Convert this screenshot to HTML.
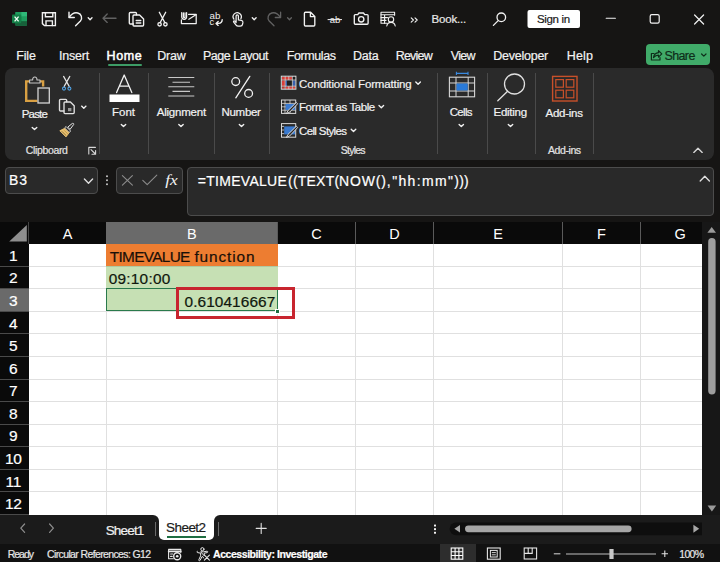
<!DOCTYPE html>
<html>
<head>
<meta charset="utf-8">
<title>Excel</title>
<style>
html,body{margin:0;padding:0;}
body{width:720px;height:562px;overflow:hidden;background:#161514;font-family:"Liberation Sans",sans-serif;color:#fff;position:relative;}
.abs{position:absolute;}
.t{position:absolute;white-space:pre;line-height:1;-webkit-text-stroke:0.2px currentColor;}
svg{position:absolute;overflow:visible;}
.s{fill:none;stroke:#f2f2f2;stroke-width:1.35;stroke-linecap:round;stroke-linejoin:round;}
.g{fill:none;stroke:#626262;stroke-width:1.35;stroke-linecap:round;stroke-linejoin:round;}
.sep{position:absolute;width:1px;background:#4a4a4a;top:73px;height:81px;}
.box{position:absolute;background:#292929;border:1px solid #4c4c4c;border-radius:4px;box-sizing:border-box;}
</style>
</head>
<body>

<!-- ================= TITLE BAR ICONS ================= -->
<svg style="left:0;top:0" width="720" height="40" viewBox="0 0 720 40">
  <!-- excel logo -->
  <g>
    <rect x="15.4" y="12" width="11.6" height="13.8" rx="1" fill="#1c9458"/>
    <rect x="21.2" y="12" width="5.8" height="4.6" fill="#2fb878"/>
    <rect x="15.4" y="12" width="5.8" height="4.6" fill="#1f9c5e"/>
    <rect x="21.2" y="16.6" width="5.8" height="4.6" fill="#1f9c5e"/>
    <rect x="15.4" y="16.6" width="5.8" height="4.6" fill="#117a42"/>
    <rect x="15.4" y="21.2" width="11.6" height="4.6" fill="#17603a"/>
    <rect x="12" y="14.6" width="9.2" height="8.6" rx="0.8" fill="#138048"/>
    <path d="M14.6 16.6 L18.6 21.4 M18.6 16.6 L14.6 21.4" stroke="#f4fff8" stroke-width="1.3" fill="none"/>
  </g>
  <!-- save -->
  <g class="s" style="stroke-width:1.4;stroke-linejoin:miter">
    <path d="M42.4 12.7 h13 v12.9 h-11 l-2 -2 z"/>
    <path d="M45.4 12.7 v4 h7.4 v-4"/>
    <path d="M46 25.6 v-4.7 h6.4 v4.7"/>
  </g>
  <!-- undo -->
  <g class="s" style="stroke-width:1.4">
    <path d="M69 12.2 v5.3 h5.3"/>
    <path d="M69.3 17.2 c2.2 -3.2 5.5 -5 8.5 -4.2 c3.6 1 5 5 2.6 8 l-4.8 4.8"/>
  </g>
  <path class="s" d="M88.2 17.8 l1.9 1.9 l1.9 -1.9"/>
  <!-- left arrow (disabled) -->
  <path class="g" d="M116 18.2 h-13 M107.2 14 l-4.2 4.2 l4.2 4.2"/>
  <!-- copy docs -->
  <g class="s">
    <path d="M133.5 24 h-3.2 a1 1 0 0 1 -1 -1 v-9.5 a1 1 0 0 1 1 -1 h5.2 a1 1 0 0 1 1 1 v1.2"/>
    <path d="M134 15 h5.6 l4 4 v6 a1 1 0 0 1 -1 1 h-8.6 a1 1 0 0 1 -1 -1 v-9 a1 1 0 0 1 1 -1 z"/>
    <path d="M136.2 20.5 h4.6 M136.2 23 h4.6"/>
  </g>
  <!-- scissors -->
  <g class="s">
    <path d="M159.3 12.3 l5.6 10.5 M165.7 12.3 l-5.6 10.5"/>
    <circle cx="159.6" cy="24.3" r="1.7"/>
    <circle cx="165.4" cy="24.3" r="1.7"/>
  </g>
  <!-- email attach -->
  <g class="s" style="stroke-width:1.25">
    <path d="M188.6 14.4 h7.6 v9.2 h-14.8 v-3.6"/>
    <path d="M195.9 14.7 l-7 4.6"/>
    <path d="M181.7 12.6 v4.2 a2.45 2.45 0 0 0 4.9 0 v-4.2 M183.4 12.8 v3.9 a0.8 0.8 0 0 0 1.6 0 v-3.9"/>
  </g>
  <!-- abc -->
  <g fill="#f0f0f0" font-family="Liberation Sans, sans-serif" font-size="8.5">
    <text x="209.6" y="18.6" textLength="10.8" lengthAdjust="spacingAndGlyphs">ab</text>
    <text x="209.6" y="25" textLength="4.6" lengthAdjust="spacingAndGlyphs">c</text>
  </g>
  <path class="s" d="M222.2 19.6 c0 2.4 -1.6 3.8 -3.6 3.8 h-2.4 M218.2 21.4 l-2.2 2 l2.2 2"/>
  <!-- touch -->
  <g class="s" style="stroke-width:1.25">
    <path d="M233.9 19.2 a4.1 4.1 0 1 1 7 -0.6"/>
    <path d="M236.1 22.6 v-6.6 a1.15 1.15 0 0 1 2.3 0 v3.9 l3 0.5 c1 0.2 1.6 1 1.5 2 l-0.3 1.8 c-0.2 1.2 -1.1 2 -2.3 2 h-2.2 c-0.8 0 -1.5 -0.3 -2 -1 l-2.4 -3.1 c-0.6 -0.8 0.4 -1.7 1.2 -1 z"/>
  </g>
  <path class="s" d="M252.3 17.8 l1.9 1.9 l1.9 -1.9"/>
  <!-- redo disabled -->
  <g class="g" style="stroke-width:1.3">
    <path d="M280.6 12.2 v5.3 h-5.3"/>
    <path d="M280.3 17.2 c-2.2 -3.2 -5.5 -5 -8.5 -4.2 c-3.6 1 -5 5 -2.6 8 l4.8 4.8"/>
  </g>
  <path class="g" d="M287.6 17.8 l1.9 1.9 l1.9 -1.9"/>
  <!-- new doc -->
  <path class="s" d="M304.4 13.2 a1 1 0 0 1 1 -1 h5.2 l4.2 4.2 v8.6 a1 1 0 0 1 -1 1 h-8.4 a1 1 0 0 1 -1 -1 z M310.4 12.4 v4.2 h4.2"/>
  <!-- ab strike -->
  <g fill="#f0f0f0" font-family="Liberation Sans, sans-serif" font-size="9.5">
    <text x="329.8" y="22.6">ab</text>
  </g>
  <path class="s" style="stroke-width:1" d="M328 19.6 h13.6"/>
  <!-- camera -->
  <g class="s">
    <path d="M354.3 15.6 a1 1 0 0 1 1 -1 h2.4 l1.2 -1.6 h4.6 l1.2 1.6 h2.4 a1 1 0 0 1 1 1 v7.6 a1 1 0 0 1 -1 1 h-11.8 a1 1 0 0 1 -1 -1 z"/>
    <circle cx="361.2" cy="19.3" r="2.7"/>
  </g>
  <!-- table person -->
  <g class="s" style="stroke-width:1.1">
    <path d="M387 23.2 h-6 v-11 h13.6 v3"/>
    <path d="M381 14.8 h13.6 M384.6 14.8 v8.4 M381 17.6 h6.5 M381 20.4 h5"/>
    <circle cx="391" cy="19.4" r="2.7"/>
    <path d="M386.8 26 c0.4 -2.4 2 -3.6 4.2 -3.6 c2.2 0 3.8 1.2 4.2 3.6"/>
  </g>
  <!-- chevrons -->
  <path class="s" style="stroke-width:1.1" d="M411.2 17.8 l2.2 2.2 l-2.2 2.2 M415 17.8 l2.2 2.2 l-2.2 2.2"/>
  <!-- search -->
  <g class="s" style="stroke-width:1.3">
    <circle cx="501.3" cy="17.3" r="4.3"/>
    <path d="M498.2 20.6 l-4.8 4.8"/>
  </g>
  <!-- sign in -->
  <rect x="527.5" y="10" width="52.5" height="18" rx="2" fill="#ffffff"/>
  <!-- window controls -->
  <path class="s" style="stroke-width:1.1" d="M606.2 18.3 h9.2"/>
  <rect class="s" style="stroke-width:1.2" x="650.2" y="14.6" width="9" height="8.6" rx="1.6"/>
  <path class="s" style="stroke-width:1.2" d="M694.6 15 l9 9 M703.6 15 l-9 9"/>
</svg>

<!-- home underline -->
<div class="abs" style="left:107.5px;top:63.6px;width:34.5px;height:2.2px;background:#3d9c66;border-radius:1px"></div>
<!-- share button -->
<div class="abs" style="left:646px;top:43.5px;width:64px;height:21.5px;background:#40ab69;border-radius:4px"></div>
<svg style="left:0;top:0" width="720" height="70" viewBox="0 0 720 70">
  <g fill="none" stroke="#0e2e1a" stroke-width="1.2" stroke-linecap="round" stroke-linejoin="round">
    <path d="M654 53.5 h-2.6 v6.5 h8.6 v-2.5"/>
    <path d="M653.5 57.5 c0.5 -3 2.5 -4.6 5 -4.8 v-2 l3.3 3.2 l-3.3 3.2 v-2 c-2 0 -3.6 0.8 -5 2.4 z"/>
    <path d="M701.6 54 l2.2 2.2 l2.2 -2.2"/>
  </g>
</svg>

<!-- ================= RIBBON ================= -->
<div class="abs" style="left:5px;top:68px;width:708.5px;height:92px;background:#2a2a2a;border-radius:8px"></div>
<div class="sep" style="left:99px"></div>
<div class="sep" style="left:148px"></div>
<div class="sep" style="left:214px"></div>
<div class="sep" style="left:269px"></div>
<div class="sep" style="left:436.5px"></div>
<div class="sep" style="left:486.5px"></div>
<div class="sep" style="left:535px"></div>
<div class="sep" style="left:592.5px"></div>

<svg style="left:0;top:0" width="720" height="165" viewBox="0 0 720 165">
  <!-- paste icon -->
  <g fill="none" stroke-linejoin="miter" stroke-linecap="butt">
    <path d="M37.4 100.9 h-11.2 v-19.5 h16.9 v5" stroke="#d9a043" stroke-width="2.4"/>
    <path d="M29.6 83 v-3 h3 c0 -1.4 0.8 -3 2.2 -3 c1.4 0 2.2 1.6 2.2 3 h3 v3 z" stroke="#c4c4c4" stroke-width="1.1" fill="#292929" stroke-linejoin="round"/>
    <rect x="38" y="88" width="11.3" height="15" stroke="#d4d4d4" stroke-width="1.3" fill="#303030"/>
  </g>
  <path class="s" d="M32.2 127.4 l2.3 2.2 l2.3 -2.2"/>
  <!-- scissors small (blue handles) -->
  <g fill="none" stroke-linecap="round" stroke-linejoin="round">
    <path d="M63.6 76.4 l5.6 10 M69.8 76.4 l-5.6 10" stroke="#e6e6e6" stroke-width="1.2"/>
    <circle cx="64" cy="88.6" r="1.5" stroke="#4fa0e0" stroke-width="1.1"/>
    <circle cx="69.4" cy="88.6" r="1.5" stroke="#4fa0e0" stroke-width="1.1"/>
  </g>
  <!-- copy -->
  <g class="s" style="stroke:#e0e0e0">
    <path d="M64 111 h-3.5 a1 1 0 0 1 -1 -1 v-9.6 a1 1 0 0 1 1 -1 h5.2 a1 1 0 0 1 1 1 v1.4"/>
    <path d="M65 102 h5.4 l3.8 3.8 v6.8 a1 1 0 0 1 -1 1 h-8.2 a1 1 0 0 1 -1 -1 v-9.6 a1 1 0 0 1 1 -1 z"/>
    <rect x="68" y="108" width="3.4" height="3.2" fill="#9a9a9a" stroke="none"/>
  </g>
  <path class="s" d="M81.6 106.1 l2.2 2.1 l2.2 -2.1"/>
  <!-- brush -->
  <g fill="none" stroke-linecap="round" stroke-linejoin="round">
    <path d="M72.4 123.4 c0.8 -0.6 1.8 0.4 1.2 1.2 l-3.6 4.8 l-2 -2 z" stroke="#e6e6e6" stroke-width="1" fill="#292929"/>
    <path d="M66.4 126.8 l4.2 4.2 l-1.4 1.6 l-4.4 -4.4 z" stroke="#e6e6e6" stroke-width="0.9" fill="#292929"/>
    <path d="M60.2 130.6 l4.4 -2.2 l4.4 4.4 l-2.8 3.8 z" stroke="#e8c070" stroke-width="1" fill="#e8c070"/>
    <path d="M62.6 131.6 l3.2 3.2 M64.4 130.6 l3 3" stroke="#a07a30" stroke-width="0.6"/>
  </g>
  <!-- dialog launcher -->
  <g class="s" style="stroke:#d8d8d8;stroke-width:1.1">
    <path d="M95.4 147.4 h-6.6 v6.6"/>
    <path d="M91 149.6 l4.4 4.4 M95.6 150.6 v3.6 h-3.6"/>
  </g>
  <!-- Font icon -->
  <path d="M116.6 92.6 l7.6 -17.6 l7.6 17.6 M119.4 86.2 h9.6" class="s" style="stroke-width:1.3"/>
  <rect x="109.5" y="94.5" width="30" height="7.5" fill="#ffffff"/>
  <path class="s" d="M121.3 124.4 l2.2 2.2 l2.2 -2.2"/>
  <!-- Alignment icon -->
  <path class="s" style="stroke:#c8c8c8;stroke-width:1.1;stroke-linecap:butt" d="M168.3 77.5 h26 M172.5 82.2 h17.5 M168.3 86.8 h26 M172.5 91.4 h17.5 M168.3 96 h26"/>
  <path class="s" d="M178.8 124.4 l2.2 2.2 l2.2 -2.2"/>
  <!-- percent -->
  <g class="s" style="stroke-width:1.3">
    <circle cx="235.7" cy="81.6" r="3.9"/>
    <circle cx="248.6" cy="93.4" r="3.9"/>
    <path d="M249.8 76.4 l-14 21.4"/>
  </g>
  <path class="s" d="M239.3 124.4 l2.2 2.2 l2.2 -2.2"/>
  <!-- conditional formatting icon -->
  <g>
    <rect x="281.3" y="76.2" width="14.6" height="13" fill="#202020" stroke="none"/>
    <rect x="282" y="76.8" width="10" height="3" fill="#d8403a"/>
    <rect x="282" y="80.4" width="3" height="5.6" fill="#d8403a"/>
    <rect x="285.6" y="86.4" width="6.6" height="2.6" fill="#d8403a"/>
    <rect x="282" y="86.4" width="3" height="2.6" fill="#b83a36"/>
    <rect x="292.6" y="80.4" width="2.8" height="5.6" fill="#3a62b0"/>
    <rect x="285.4" y="80.4" width="1.6" height="5.6" fill="#3a62b0"/>
    <rect x="292.6" y="86.4" width="2.8" height="2.6" fill="#d8403a"/>
    <path d="M281.3 80 h14.6 M281.3 86.2 h14.6 M285.2 76.2 v13 M292.4 76.2 v13 M288.8 76.2 v3.8 M288.8 86.2 v3" stroke="#e0e0e0" stroke-width="0.7" fill="none"/>
    <rect x="281.3" y="76.2" width="14.6" height="13" fill="none" stroke="#dcdcdc" stroke-width="1"/>
  </g>
  <path class="s" d="M415.8 82 l2.3 2.3 l2.3 -2.3"/>
  <!-- format as table icon -->
  <g>
    <rect x="281.5" y="100" width="14.2" height="13.4" fill="none" stroke="#d8d8d8" stroke-width="1"/>
    <path d="M281.5 103.4 h14.2 M281.5 106.8 h14.2 M281.5 110.2 h14.2 M285 100 v13.4 M290 100 v13.4" stroke="#d8d8d8" stroke-width="0.8" fill="none"/>
    <rect x="285.6" y="104" width="9.6" height="6" fill="#3a7ad0"/>
    <path d="M296.4 102.4 l-8.4 8.2 l-1.6 3 l3.2 -1.4 l8 -8.4 z" fill="#292929" stroke="#e8e8e8" stroke-width="0.9" stroke-linejoin="round"/>
  </g>
  <path class="s" d="M379 105.4 l2.3 2.3 l2.3 -2.3"/>
  <!-- cell styles icon -->
  <g>
    <rect x="281.5" y="123.6" width="14.2" height="13.6" fill="none" stroke="#d8d8d8" stroke-width="1"/>
    <rect x="284.2" y="126.4" width="10.8" height="8" fill="#3a7ad0"/>
    <path d="M281.5 126.4 h2.6 M281.5 130 h2.6 M281.5 133.6 h2.6" stroke="#d8d8d8" stroke-width="0.8"/>
    <path d="M296.4 126.2 l-8.4 8.2 l-1.6 3 l3.2 -1.4 l8 -8.4 z" fill="#292929" stroke="#e8e8e8" stroke-width="0.9" stroke-linejoin="round"/>
  </g>
  <path class="s" d="M351.2 129.2 l2.3 2.3 l2.3 -2.3"/>
  <!-- cells icon -->
  <g>
    <path d="M456.4 73.4 h11.6 M456.4 71.8 v3.2 M468 71.8 v3.2" stroke="#3a8ae0" stroke-width="1.1" fill="none"/>
    <rect x="449.4" y="77.2" width="25.2" height="19.6" fill="none" stroke="#d8d8d8" stroke-width="1.1"/>
    <path d="M449.4 83 h25.2 M449.4 91 h25.2 M456 77.2 v19.6 M468.2 77.2 v19.6" stroke="#d8d8d8" stroke-width="1" fill="none"/>
    <rect x="456.5" y="83.5" width="11.2" height="7" fill="#2a7ad8"/>
  </g>
  <path class="s" d="M459.1 124.4 l2.2 2.2 l2.2 -2.2"/>
  <!-- editing icon -->
  <g class="s" style="stroke:#e0e0e0;stroke-width:1.3">
    <circle cx="514.5" cy="84" r="10"/>
    <path d="M507.6 91.2 l-9.8 9.6"/>
  </g>
  <path class="s" d="M508.3 124.4 l2.2 2.2 l2.2 -2.2"/>
  <!-- add-ins icon -->
  <g fill="none" stroke="#c8502a" stroke-width="1.4">
    <rect x="552.6" y="76.4" width="24.4" height="24.6"/>
    <rect x="555.8" y="79.6" width="7.6" height="7.6" stroke-width="1.2"/>
    <rect x="566.2" y="79.6" width="7.6" height="7.6" stroke-width="1.2"/>
    <rect x="555.8" y="90.2" width="7.6" height="7.6" stroke-width="1.2"/>
    <rect x="566.2" y="90.2" width="7.6" height="7.6" stroke-width="1.2"/>
  </g>
  <!-- collapse chevron -->
  <path class="s" style="stroke:#d8d8d8" d="M693.8 152.4 l4.2 -4.2 l4.2 4.2"/>
</svg>

<!-- ================= FORMULA BAR ================= -->
<div class="box" style="left:5px;top:167px;width:93px;height:26.5px"></div>
<div class="box" style="left:116px;top:167px;width:67px;height:26.5px"></div>
<div class="box" style="left:187px;top:167px;width:527px;height:49px"></div>
<svg style="left:0;top:160px" width="720" height="62" viewBox="0 160 720 62">
  <path class="s" style="stroke:#e0e0e0" d="M84.4 179 l4.1 4.3 l4.1 -4.3"/>
  <g fill="#d0d0d0"><circle cx="107" cy="176.2" r="0.95"/><circle cx="107" cy="180.2" r="0.95"/><circle cx="107" cy="184.2" r="0.95"/></g>
  <path d="M122.4 175.6 l10 9.6 M132.4 175.6 l-10 9.6" stroke="#8c8c8c" stroke-width="1.1" fill="none" stroke-linecap="round"/>
  <path d="M142.8 180.4 l4.4 4.2 l9.6 -9.4" stroke="#8c8c8c" stroke-width="1.1" fill="none" stroke-linecap="round" stroke-linejoin="round"/>
  <text x="165.2" y="185" font-family="Liberation Serif, serif" font-style="italic" font-size="15.5" fill="#f4f4f4" textLength="12.5" lengthAdjust="spacingAndGlyphs">fx</text>
  <path class="s" style="stroke:#e0e0e0" d="M700.2 181 l4.6 -4.8 l4.6 4.8"/>
</svg>

<!-- ================= GRID ================= -->
<div class="abs" style="left:0;top:222px;width:720px;height:292.5px;background:#0a0a0a"></div>
<div class="abs" style="left:29px;top:222px;width:77px;height:21.5px;background:#0a0a0a"></div>
<div class="abs" style="left:105.5px;top:222px;width:1px;height:21.5px;background:#5a5a5a"></div>
<div class="abs" style="left:106px;top:222px;width:171.5px;height:21.5px;background:#6a6a6a"></div>
<div class="abs" style="left:277.0px;top:222px;width:1px;height:21.5px;background:#5a5a5a"></div>
<div class="abs" style="left:277.5px;top:222px;width:78.0px;height:21.5px;background:#0a0a0a"></div>
<div class="abs" style="left:355.0px;top:222px;width:1px;height:21.5px;background:#5a5a5a"></div>
<div class="abs" style="left:355.5px;top:222px;width:78.0px;height:21.5px;background:#0a0a0a"></div>
<div class="abs" style="left:433.0px;top:222px;width:1px;height:21.5px;background:#5a5a5a"></div>
<div class="abs" style="left:433.5px;top:222px;width:129.0px;height:21.5px;background:#0a0a0a"></div>
<div class="abs" style="left:562.0px;top:222px;width:1px;height:21.5px;background:#5a5a5a"></div>
<div class="abs" style="left:562.5px;top:222px;width:78.0px;height:21.5px;background:#0a0a0a"></div>
<div class="abs" style="left:640.0px;top:222px;width:1px;height:21.5px;background:#5a5a5a"></div>
<div class="abs" style="left:640.5px;top:222px;width:61.5px;height:21.5px;background:#0a0a0a"></div>
<div class="abs" style="left:701.5px;top:222px;width:1px;height:21.5px;background:#5a5a5a"></div>
<div class="abs" style="left:28px;top:222px;width:1px;height:21.5px;background:#444"></div>
<svg style="left:0;top:222px" width="30" height="22" viewBox="0 222 30 22"><path d="M26.8 225 v16.6 h-17.6 z" fill="#8e8e8e"/></svg>
<div class="abs" style="left:29px;top:243.5px;width:673px;height:271px;background:#ffffff"></div>
<div class="abs" style="left:105.5px;top:243.5px;width:1px;height:271px;background:#e0e0e0"></div>
<div class="abs" style="left:277.0px;top:243.5px;width:1px;height:271px;background:#e0e0e0"></div>
<div class="abs" style="left:355.0px;top:243.5px;width:1px;height:271px;background:#e0e0e0"></div>
<div class="abs" style="left:433.0px;top:243.5px;width:1px;height:271px;background:#e0e0e0"></div>
<div class="abs" style="left:562.0px;top:243.5px;width:1px;height:271px;background:#e0e0e0"></div>
<div class="abs" style="left:640.0px;top:243.5px;width:1px;height:271px;background:#e0e0e0"></div>
<div class="abs" style="left:29px;top:265.6px;width:673px;height:1px;background:#e0e0e0"></div>
<div class="abs" style="left:29px;top:288.2px;width:673px;height:1px;background:#e0e0e0"></div>
<div class="abs" style="left:29px;top:310.7px;width:673px;height:1px;background:#e0e0e0"></div>
<div class="abs" style="left:29px;top:333.3px;width:673px;height:1px;background:#e0e0e0"></div>
<div class="abs" style="left:29px;top:355.9px;width:673px;height:1px;background:#e0e0e0"></div>
<div class="abs" style="left:29px;top:378.5px;width:673px;height:1px;background:#e0e0e0"></div>
<div class="abs" style="left:29px;top:401.1px;width:673px;height:1px;background:#e0e0e0"></div>
<div class="abs" style="left:29px;top:423.7px;width:673px;height:1px;background:#e0e0e0"></div>
<div class="abs" style="left:29px;top:446.2px;width:673px;height:1px;background:#e0e0e0"></div>
<div class="abs" style="left:29px;top:468.8px;width:673px;height:1px;background:#e0e0e0"></div>
<div class="abs" style="left:29px;top:491.4px;width:673px;height:1px;background:#e0e0e0"></div>
<!-- filled cells -->
<div class="abs" style="left:106px;top:243.5px;width:171.5px;height:22.7px;background:#ed7d31"></div>
<div class="abs" style="left:106px;top:266.5px;width:171.5px;height:22px;background:#c6e0b4"></div>
<div class="abs" style="left:106px;top:288.5px;width:171.5px;height:22.5px;background:#c6e0b4"></div>
<div class="abs" style="left:106px;top:266px;width:171.5px;height:1px;background:#b0c8a0"></div>
<!-- selection -->
<div class="abs" style="left:105.5px;top:287.8px;width:172.5px;height:23.6px;border:1.4px solid #2a7a4c;box-sizing:border-box"></div>
<div class="abs" style="left:275.4px;top:309px;width:4.6px;height:4.6px;background:#1e6e42;border:0.8px solid #fff;box-sizing:border-box"></div>
<!-- red box -->
<div class="abs" style="left:175.8px;top:287.2px;width:119.2px;height:32.2px;border:3px solid #c8252f;box-sizing:border-box"></div>
<div class="t" style="left:47.5px;width:40px;text-align:center;top:227.0px;font-size:14.5px;-webkit-text-stroke:0;color:#fff">A</div>
<div class="t" style="left:171.8px;width:40px;text-align:center;top:227.0px;font-size:14.5px;-webkit-text-stroke:0;color:#fff">B</div>
<div class="t" style="left:296.5px;width:40px;text-align:center;top:227.0px;font-size:14.5px;-webkit-text-stroke:0;color:#fff">C</div>
<div class="t" style="left:374.5px;width:40px;text-align:center;top:227.0px;font-size:14.5px;-webkit-text-stroke:0;color:#fff">D</div>
<div class="t" style="left:478.0px;width:40px;text-align:center;top:227.0px;font-size:14.5px;-webkit-text-stroke:0;color:#fff">E</div>
<div class="t" style="left:581.5px;width:40px;text-align:center;top:227.0px;font-size:14.5px;-webkit-text-stroke:0;color:#fff">F</div>
<div class="t" style="left:660.2px;width:40px;text-align:center;top:227.0px;font-size:14.5px;-webkit-text-stroke:0;color:#fff">G</div>
<div class="abs" style="left:0;top:265.6px;width:28.5px;height:1px;background:#4a4a4a"></div>
<div class="t" style="left:-1px;width:28.5px;text-align:center;top:248.0px;font-size:15.5px;letter-spacing:-0.3px;color:#fff">1</div>
<div class="abs" style="left:0;top:288.2px;width:28.5px;height:1px;background:#4a4a4a"></div>
<div class="t" style="left:-1px;width:28.5px;text-align:center;top:270.0px;font-size:15.5px;letter-spacing:-0.3px;color:#fff">2</div>
<div class="abs" style="left:0;top:288.7px;width:28.5px;height:22.6px;background:#6a6a6a"></div>
<div class="abs" style="left:0;top:310.7px;width:28.5px;height:1px;background:#4a4a4a"></div>
<div class="t" style="left:-1px;width:28.5px;text-align:center;top:293.0px;font-size:15.5px;letter-spacing:-0.3px;color:#fff">3</div>
<div class="abs" style="left:0;top:333.3px;width:28.5px;height:1px;background:#4a4a4a"></div>
<div class="t" style="left:-1px;width:28.5px;text-align:center;top:316.0px;font-size:15.5px;letter-spacing:-0.3px;color:#fff">4</div>
<div class="abs" style="left:0;top:355.9px;width:28.5px;height:1px;background:#4a4a4a"></div>
<div class="t" style="left:-1px;width:28.5px;text-align:center;top:338.0px;font-size:15.5px;letter-spacing:-0.3px;color:#fff">5</div>
<div class="abs" style="left:0;top:378.5px;width:28.5px;height:1px;background:#4a4a4a"></div>
<div class="t" style="left:-1px;width:28.5px;text-align:center;top:361.0px;font-size:15.5px;letter-spacing:-0.3px;color:#fff">6</div>
<div class="abs" style="left:0;top:401.1px;width:28.5px;height:1px;background:#4a4a4a"></div>
<div class="t" style="left:-1px;width:28.5px;text-align:center;top:383.0px;font-size:15.5px;letter-spacing:-0.3px;color:#fff">7</div>
<div class="abs" style="left:0;top:423.7px;width:28.5px;height:1px;background:#4a4a4a"></div>
<div class="t" style="left:-1px;width:28.5px;text-align:center;top:406.0px;font-size:15.5px;letter-spacing:-0.3px;color:#fff">8</div>
<div class="abs" style="left:0;top:446.2px;width:28.5px;height:1px;background:#4a4a4a"></div>
<div class="t" style="left:-1px;width:28.5px;text-align:center;top:428.0px;font-size:15.5px;letter-spacing:-0.3px;color:#fff">9</div>
<div class="abs" style="left:0;top:468.8px;width:28.5px;height:1px;background:#4a4a4a"></div>
<div class="t" style="left:-1px;width:28.5px;text-align:center;top:451.0px;font-size:15.5px;letter-spacing:-0.3px;color:#fff">10</div>
<div class="abs" style="left:0;top:491.4px;width:28.5px;height:1px;background:#4a4a4a"></div>
<div class="t" style="left:-1px;width:28.5px;text-align:center;top:474.0px;font-size:15.5px;letter-spacing:-0.3px;color:#fff">11</div>
<div class="abs" style="left:0;top:514.0px;width:28.5px;height:1px;background:#4a4a4a"></div>
<div class="t" style="left:-1px;width:28.5px;text-align:center;top:496.0px;font-size:15.5px;letter-spacing:-0.3px;color:#fff">12</div>

<!-- vertical scrollbar -->
<div class="abs" style="left:702px;top:222px;width:18px;height:292.5px;background:#171717"></div>
<svg style="left:702px;top:222px" width="18" height="293" viewBox="702 222 18 293">
  <path d="M707.4 232.8 l4.3 -5.8 l4.3 5.8 z" fill="#9a9a9a"/>
  <rect x="708.2" y="238" width="7.4" height="156.5" rx="3.7" fill="#9e9e9e"/>
  <path d="M707.6 505.6 h8.6 l-4.3 6 z" fill="#9a9a9a"/>
</svg>

<!-- ================= SHEET BAR ================= -->
<div class="abs" style="left:0;top:514.5px;width:720px;height:29.5px;background:#1b1b1b"></div>
<div class="abs" style="left:0;top:514.5px;width:159px;height:10px;background:#ffffff"></div>
<div class="abs" style="left:0;top:514.5px;width:159px;height:29px;background:#1b1b1b;border-radius:0 6px 0 0"></div>
<div class="abs" style="left:214.2px;top:514.5px;width:10px;height:10px;background:#ffffff"></div>
<div class="abs" style="left:214.2px;top:514.5px;width:505.8px;height:29px;background:#1b1b1b;border-radius:6px 0 0 0"></div>
<div class="abs" style="left:159px;top:513px;width:55.2px;height:27px;background:#ffffff;border-radius:0 0 5px 5px"></div>
<div class="abs" style="left:167px;top:535.5px;width:39px;height:2px;background:#1e6e42"></div>
<div class="abs" style="left:155px;top:521.5px;width:1px;height:14px;background:#6a6a6a"></div>
<div class="abs" style="left:217.5px;top:521.5px;width:1px;height:14px;background:#6a6a6a"></div>
<svg style="left:0;top:514px" width="720" height="48" viewBox="0 514 720 48">
  <path d="M24.6 524 l-3.8 4.2 l3.8 4.2" class="s" style="stroke:#8e8e8e;stroke-width:1.2"/>
  <path d="M49.6 524 l3.8 4.2 l-3.8 4.2" class="s" style="stroke:#8e8e8e;stroke-width:1.2"/>
  <path d="M256.2 528.4 h10 M261.2 523.4 v10" class="s" style="stroke:#e0e0e0;stroke-width:1.1"/>
  <g fill="#f4f4f4"><rect x="434" y="524.6" width="2" height="1.9"/><rect x="434" y="528.2" width="2" height="1.9"/><rect x="434" y="531.8" width="2" height="1.9"/></g>
  <path d="M456 522.4 h246 v12.8 h-246 a6.4 6.4 0 0 1 0 -12.8 z" fill="#0e0e0e"/>
  <path d="M460 525 v7.4 l-5.6 -3.7 z" fill="#a6a6a6"/>
  <rect x="465" y="525.4" width="166.6" height="6.8" rx="3.4" fill="#a6a6a6"/>
  <path d="M693.4 524.8 v8 l5.8 -4 z" fill="#a6a6a6"/>
</svg>

<!-- ================= STATUS BAR ================= -->
<div class="abs" style="left:0;top:544px;width:720px;height:18px;background:#111111"></div>
<div class="abs" style="left:440px;top:544px;width:35.5px;height:18px;background:#2d2d2d"></div>
<svg style="left:0;top:544px" width="720" height="18" viewBox="0 544 720 18">
  <!-- macro icon -->
  <g class="s" style="stroke:#e8e8e8;stroke-width:1.1">
    <path d="M173.4 558.8 h-4.8 v-9.4 h12.2 v3"/>
    <path d="M168.6 551.4 h12.2" stroke-width="1.6"/>
    <path d="M170.6 554 h2.2 M170.6 556.4 h1.6"/>
    <circle cx="177.2" cy="556.3" r="3.5" stroke-width="1.4" fill="#111111"/>
    <circle cx="177.2" cy="556.3" r="1.3" fill="#e8e8e8" stroke="none"/>
  </g>
  <!-- accessibility icon -->
  <g class="s" style="stroke:#e8e8e8;stroke-width:1">
    <circle cx="202.4" cy="549.2" r="1.6"/>
    <path d="M197.4 551.2 c-0.8 0.2 -0.6 1.4 0.2 1.4 l3 0.6 v2.6 l-1.8 4 c-0.4 0.8 0.8 1.4 1.2 0.6 l2.2 -4 h0.4 l1 1.6 M204.2 555.4 v-2.2 l3 -0.6 c0.8 -0.2 0.8 -1.4 -0.2 -1.4 l-3.4 0.6 h-2.6 z"/>
    <path d="M204.4 555.2 l5 5 M209.4 555.2 l-5 5" stroke-width="1.1"/>
  </g>
  <!-- normal view -->
  <g fill="none" stroke="#ffffff" stroke-width="1.1">
    <rect x="451.2" y="548" width="11.6" height="11.2"/>
    <path d="M455.1 548 v11.2 M458.9 548 v11.2 M451.2 551.8 h11.6 M451.2 555.5 h11.6"/>
  </g>
  <!-- page layout -->
  <g fill="none" stroke="#e6e6e6" stroke-width="1.1">
    <rect x="487.4" y="548" width="12.8" height="11.2"/>
    <rect x="490.4" y="550.4" width="6.8" height="6.6" stroke-width="1"/>
    <path d="M491.8 552.6 h4 M491.8 554.8 h4" stroke-width="0.9"/>
  </g>
  <!-- page break -->
  <g fill="none" stroke="#e6e6e6" stroke-width="1.1">
    <rect x="524.2" y="548" width="12.4" height="11"/>
    <path d="M524.2 553.4 h8 v-5.4 M528.2 548 v5.4"/>
  </g>
  <!-- zoom slider -->
  <path d="M553.8 553.8 h6.6" stroke="#c8c8c8" stroke-width="1.1"/>
  <path d="M566 554 h90" stroke="#c0c0c0" stroke-width="1"/>
  <rect x="609.4" y="549" width="4.2" height="10" fill="#c8c8c8"/>
  <path d="M661.6 553.8 h6.4 M664.8 550.6 v6.4" stroke="#e0e0e0" stroke-width="1.1"/>
</svg>

<div class="t" style="left:431.5px;top:14.0px;font-size:11.5px;letter-spacing:-0.167px;color:#e8e8e8;">Book...</div>
<div class="t" style="left:537.0px;top:14.0px;font-size:11.5px;letter-spacing:-0.333px;color:#1a1a1a;">Sign in</div>
<div class="t" style="left:16.3px;top:50.0px;font-size:12.5px;letter-spacing:-0.200px;color:#f2f2f2;">File</div>
<div class="t" style="left:59.0px;top:50.0px;font-size:12.5px;letter-spacing:-0.200px;color:#f2f2f2;">Insert</div>
<div class="t" style="left:157.3px;top:50.0px;font-size:12.5px;letter-spacing:-0.200px;color:#f2f2f2;">Draw</div>
<div class="t" style="left:203.0px;top:50.0px;font-size:12.5px;letter-spacing:-0.470px;color:#f2f2f2;">Page Layout</div>
<div class="t" style="left:286.7px;top:50.0px;font-size:12.5px;letter-spacing:-0.386px;color:#f2f2f2;">Formulas</div>
<div class="t" style="left:353.0px;top:50.0px;font-size:12.5px;letter-spacing:-0.233px;color:#f2f2f2;">Data</div>
<div class="t" style="left:395.7px;top:50.0px;font-size:12.5px;letter-spacing:-0.800px;color:#f2f2f2;">Review</div>
<div class="t" style="left:450.7px;top:50.0px;font-size:12.5px;letter-spacing:-0.667px;color:#f2f2f2;">View</div>
<div class="t" style="left:493.3px;top:50.0px;font-size:12.5px;letter-spacing:-0.250px;color:#f2f2f2;">Developer</div>
<div class="t" style="left:566.7px;top:50.0px;font-size:12.5px;letter-spacing:0.200px;color:#f2f2f2;">Help</div>
<div class="t" style="left:106.6px;top:50.0px;font-size:12.5px;letter-spacing:0.600px;color:#ffffff;-webkit-text-stroke:0.5px #ffffff;">Home</div>
<div class="t" style="left:664.5px;top:50.0px;font-size:12.5px;letter-spacing:-0.625px;color:#0e2e1a;">Share</div>
<div class="t" style="left:21.7px;top:109.0px;font-size:11.5px;letter-spacing:-0.800px;color:#f2f2f2;">Paste</div>
<div class="t" style="left:25.8px;top:145.0px;font-size:10.5px;letter-spacing:-0.350px;color:#e4e4e4;">Clipboard</div>
<div class="t" style="left:112.0px;top:107.0px;font-size:11.5px;letter-spacing:0.000px;color:#f2f2f2;">Font</div>
<div class="t" style="left:156.7px;top:107.0px;font-size:11.5px;letter-spacing:-0.212px;color:#f2f2f2;">Alignment</div>
<div class="t" style="left:221.5px;top:107.0px;font-size:11.5px;letter-spacing:-0.300px;color:#f2f2f2;">Number</div>
<div class="t" style="left:299.0px;top:79.0px;font-size:11.5px;letter-spacing:-0.143px;color:#f2f2f2;">Conditional Formatting</div>
<div class="t" style="left:299.0px;top:102.0px;font-size:11.5px;letter-spacing:-0.429px;color:#f2f2f2;">Format as Table</div>
<div class="t" style="left:299.0px;top:126.0px;font-size:11.5px;letter-spacing:-0.630px;color:#f2f2f2;">Cell Styles</div>
<div class="t" style="left:340.7px;top:145.0px;font-size:10.5px;letter-spacing:-0.740px;color:#e4e4e4;">Styles</div>
<div class="t" style="left:449.7px;top:107.0px;font-size:11.5px;letter-spacing:-0.675px;color:#f2f2f2;">Cells</div>
<div class="t" style="left:493.5px;top:107.0px;font-size:11.5px;letter-spacing:-0.250px;color:#f2f2f2;">Editing</div>
<div class="t" style="left:545.5px;top:108.0px;font-size:11.5px;letter-spacing:-0.250px;color:#f2f2f2;">Add-ins</div>
<div class="t" style="left:548.0px;top:145.0px;font-size:10.5px;letter-spacing:-0.417px;color:#e4e4e4;">Add-ins</div>
<div class="t" style="left:9.0px;top:173.0px;font-size:14px;letter-spacing:1.000px;color:#ffffff;">B3</div>
<div class="t" style="left:108.7px;top:271.0px;font-size:15.4px;letter-spacing:0.243px;color:#10180c;">09:10:00</div>
<div class="t" style="left:184.5px;top:294.0px;font-size:15.4px;letter-spacing:0.090px;color:#10180c;">0.610416667</div>
<div class="t" style="left:105.7px;top:524.0px;font-size:13.5px;letter-spacing:-0.820px;color:#f0f0f0;">Sheet1</div>
<div class="t" style="left:166.0px;top:521.0px;font-size:13.5px;letter-spacing:-0.540px;color:#1a1a1a;">Sheet2</div>
<div class="t" style="left:7.7px;top:549.0px;font-size:10.5px;letter-spacing:-1.000px;color:#e6e6e6;">Ready</div>
<div class="t" style="left:47.0px;top:549.0px;font-size:10.5px;letter-spacing:-0.622px;color:#e6e6e6;">Circular References: G12</div>
<div class="t" style="left:213.0px;top:549.0px;font-size:10.5px;letter-spacing:-0.440px;color:#ffffff;font-weight:bold;">Accessibility: Investigate</div>
<div class="t" style="left:679.3px;top:549.0px;font-size:10.5px;letter-spacing:-0.700px;color:#e6e6e6;">100%</div>
<div class="t" style="left:0;top:174.0px;width:720px;font-size:14px;color:#ffffff;"><span style="position:absolute;left:197.8px;top:0;letter-spacing:0.278px">=TIMEVALUE</span><span style="position:absolute;left:288.0px;top:0;letter-spacing:0.217px">((TEXT(</span><span style="position:absolute;left:339.0px;top:0;letter-spacing:0.840px">NOW(),</span><span style="position:absolute;left:392.2px;top:0;letter-spacing:1.333px">&quot;hh:mm&quot;</span><span style="position:absolute;left:454.3px;top:0;letter-spacing:0.250px">)))</span></div>
<div class="t" style="left:0;top:249.0px;width:720px;font-size:15.4px;color:#1a1008;"><span style="position:absolute;left:109.7px;top:0;letter-spacing:-0.675px">TIMEVALUE</span> <span style="position:absolute;left:194.4px;top:0;letter-spacing:0.886px">function</span></div>
</body>
</html>
